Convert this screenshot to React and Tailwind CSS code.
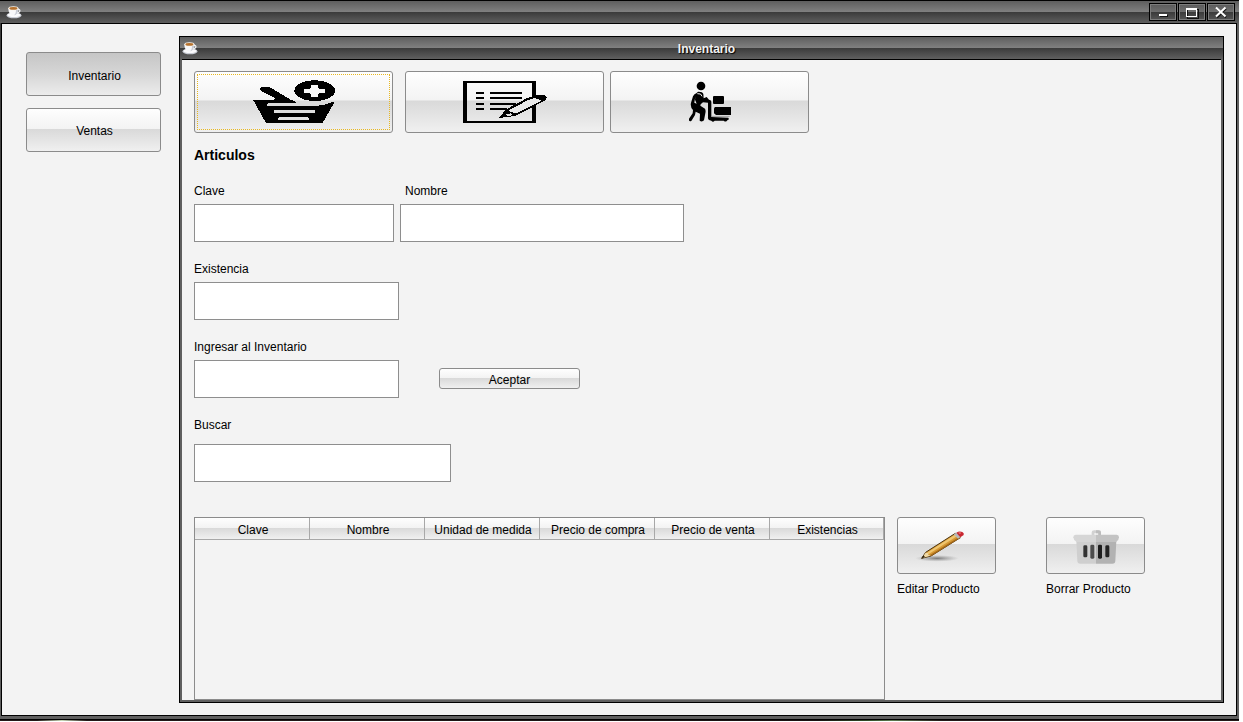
import React from 'react';

const GLOSS =
  'bg-[linear-gradient(to_bottom,#fefefe_0%,#f3f3f3_47%,#d9d9d9_48%,#f0f0f0_100%)]';
const BAR =
  'bg-[linear-gradient(to_bottom,#5e5e5e_0%,#808080_50%,#3b3b3b_51%,#5f5f5f_100%)]';

const columns = [
  'Clave',
  'Nombre',
  'Unidad de medida',
  'Precio de compra',
  'Precio de venta',
  'Existencias',
];

function CoffeeIcon() {
  return (
    <svg width="16" height="14" viewBox="0 0 16 14" aria-hidden="true" className="shrink-0">
      <ellipse cx="8" cy="10.4" rx="7.5" ry="2.9" fill="#c9ccd4" />
      <ellipse cx="8" cy="10" rx="6.500" ry="2.100" fill="#fbfbfd" />
      <path d="M2.400 3.200h10c.2 3.600-1.600 7.200-5 7.200s-5.200-3.600-5-7.200z" fill="#f8f8fa" />
      <path d="M10 5c0 3-.8 4.600-2 5.200 3.200-.2 4.400-3.200 4.400-6.600z" fill="#c9cdd6" />
      <path d="M12 4.500c2.600-.6 2.800 2.800-.8 3" fill="none" stroke="#f2f3f6" strokeWidth="1.200" />
      <ellipse cx="7.400" cy="3.200" rx="5" ry="2" fill="#fbf4ea" />
      <ellipse cx="7.400" cy="3.400" rx="4" ry="1.400" fill="#b5722f" />
    </svg>
  );
}

function BasketIcon() {
  return (
    <svg width="84" height="44" viewBox="186 42 252 132" shapeRendering="crispEdges" aria-hidden="true">
      <path
        d="M189 101H243L261 100L211 73Q207 66 217 63H238L300 100L322 109L305 111H237Q228 116 234 120H376Q404 119 432 107V111L398 171H228Z"
        fill="#000"
      />
      <ellipse cx="374" cy="74" rx="61" ry="31" fill="#000" />
      <path
        d="M363 57H385V67L391 69H406V81H390L385 84V93H363V84L358 81H342V69H358L363 66Z"
        fill="#f7f7f7"
      />
      <path d="M251 132H372Q378 136 373 141H256Q248 138 251 132Z" fill="#dedede" />
      <path d="M270 153H352Q360 157 355 162H266Q263 156 270 153Z" fill="#e3e3e3" />
      <path d="M237 111H305L330 108H372Q400 111 432 107Q404 119 376 120H234Q228 116 237 111Z" fill="#dadada" />
    </svg>
  );
}

function ListIcon() {
  return (
    <svg width="84" height="44" viewBox="189 42 252 132" shapeRendering="crispEdges" aria-hidden="true">
      <path
        fillRule="evenodd"
        d="M189 45H408V171H189ZM201 51V165H396V51Z"
        fill="#000"
      />
      <path
        d="M228 78H252V84H228ZM228 93H252V99H228ZM228 111H252V117H228ZM228 126H252V132H228ZM270 78H366V84H270ZM270 93H366V99H270ZM270 111H348V117H270ZM270 126H322V132H270Z"
        fill="#000"
      />
      <path
        d="M298 155L317 131L378 98L408 87H432L441 93L438 102L350 148L322 154Z"
        fill="#000"
      />
      <path d="M325 134L384 102L406 96L424 104L350 142L339 140Z" fill="#eaeaea" />
      <path d="M318 146L331 142L338 147L322 151Z" fill="#e0e0e0" />
    </svg>
  );
}

function PorterIcon() {
  return (
    <svg width="42" height="44" viewBox="249 42 126 132" aria-hidden="true">
      <circle cx="285" cy="60" r="13" fill="#000" />
      <path
        d="M271 82L276 77Q289 76 292 84L293 97L302 93L309 101Q315 101 316 107V153L367 155Q371 161 364 163Q360 170 353 164H326Q321 170 316 164L309 162Q305 159 306 153V110L291 109L284 115L283 119L297 128Q300 134 298 142L294 163Q288 169 281 164L282 143L269 137L267 147L256 165Q249 168 248 160L260 142L261 132Q252 122 255 110L261 91Q265 84 271 82Z"
        fill="#000"
      />
      <path d="M268 91L265 110L272 113L267 101Z" fill="#f0f0f0" />
      <path d="M274 83Q286 81 288 91" fill="none" stroke="#f7f7f7" strokeWidth="3" />
      <rect x="321" y="90" width="33" height="24" rx="3" fill="#000" />
      <path d="M327 123H375V147H330L324 142V127Z" fill="#000" />
      <path d="M316 151H371" stroke="#777" strokeWidth="2" />
    </svg>
  );
}

function PencilIcon() {
  return (
    <svg width="64" height="32" viewBox="74 58 192 96" aria-hidden="true">
      <defs>
        <radialGradient id="pencil-shadow">
          <stop offset="0" stopColor="#555" stopOpacity="0.75" />
          <stop offset="1" stopColor="#888" stopOpacity="0" />
        </radialGradient>
      </defs>
      <ellipse cx="140" cy="143" rx="66" ry="10" fill="url(#pencil-shadow)" />
      <path d="M94 143L106 125L195 68L210 81L122 136Z" fill="#d79a35" stroke="#4c3410" strokeWidth="3" />
      <path d="M110 126L196 71L201 76L114 131Z" fill="#efc56f" />
      <path d="M118 134L206 79L209 82L123 136Z" fill="#a76a19" />
      <path d="M95 142L106 126L112 127L114 132L121 135Z" fill="#f0d9a5" />
      <path d="M93 144L99 134L104 139Z" fill="#2d220e" />
      <path d="M190 71L198 66L211 78L203 84Z" fill="#b8b8b8" />
      <path d="M198 66Q207 60 216 64Q222 67 220 73L210 80Z" fill="#c82630" />
      <path d="M203 66Q209 63 213 66L209 70Z" fill="#ec7c7e" />
    </svg>
  );
}

function TrashIcon() {
  return (
    <svg width="48" height="36" viewBox="545 52 144 108" aria-hidden="true">
      <path d="M604 73V65Q604 59 612 59H624Q632 59 632 65V73H624V68H612V73Z" fill="#d2d2d2" />
      <path d="M617 59H624Q632 59 632 65V73H624V68H617Z" fill="#bdbdbd" />
      <path d="M558 90H617V159H570Q561 159 561 150Z" fill="#cfcfcf" />
      <path d="M617 90H678L675 150Q675 159 666 159H617Z" fill="#b2b2b2" />
      <path d="M556 72H617V94H559Q549 88 549 80Q549 73 556 72Z" fill="#d6d6d6" />
      <path d="M617 72H679Q686 73 686 80Q686 88 677 94H617Z" fill="#c3c3c3" />
      <rect x="579" y="104" width="12" height="36" rx="4" fill="#333" />
      <rect x="600" y="102" width="12" height="42" rx="4" fill="#4c4c4c" />
      <rect x="623" y="102" width="12" height="42" rx="4" fill="#1d1d1d" />
      <rect x="645" y="104" width="12" height="36" rx="4" fill="#222" />
    </svg>
  );
}

function WindowButton({ label, children }) {
  return (
    <button
      type="button"
      aria-label={label}
      className="flex h-[18px] w-7 items-center justify-center border border-black bg-[linear-gradient(to_bottom,#5a5a5a_0%,#6e6e6e_48%,#3a3a3a_50%,#555555_100%)] shadow-[inset_0_0_0_1px_#7d7d7d]"
    >
      <svg width="14" height="14" viewBox="0 0 14 14" fill="none" aria-hidden="true" shapeRendering="crispEdges">
        {children}
      </svg>
    </button>
  );
}

function GlossButton({ className, children, ...rest }) {
  return (
    <button
      type="button"
      className={`flex shrink-0 items-center justify-center rounded-[3px] border border-[#8b8b8b] ${GLOSS} ${className}`}
      {...rest}
    >
      {children}
    </button>
  );
}

function Field({ id, label, width, gap = 'gap-[5px]', indent = '' }) {
  return (
    <div className={`flex flex-col ${gap}`}>
      <label htmlFor={id} className={`h-4 leading-4 ${indent}`}>
        {label}
      </label>
      <input
        id={id}
        type="text"
        className={`h-[38px] border border-[#8e8e8e] bg-white px-1 outline-none ${width}`}
      />
    </div>
  );
}

function InventoryFrame() {
  return (
    <section className="flex min-w-0 flex-1 flex-col border border-black bg-[#606060]">
      <header className={`flex h-[22px] shrink-0 items-center pr-2 pl-[2px] ${BAR}`}>
        <CoffeeIcon />
        <h1 className="flex-1 pt-px text-center text-xs font-bold text-[#f2f2f2] [text-shadow:1px_1px_1px_#000]">
          Inventario
        </h1>
      </header>
      <div className="flex min-h-0 flex-1 flex-col px-[2px] pb-[2px]">
        <div className="flex min-h-0 flex-1 flex-col border-t border-black bg-[#f3f3f3] px-3 pt-[11px]">
          <div className="flex">
            <GlossButton aria-label="Agregar artículo" className="relative h-[62px] w-[199px]">
              <span className="absolute inset-[2px] border border-dotted border-[#e8b820]" />
              <BasketIcon />
            </GlossButton>
            <GlossButton aria-label="Lista de artículos" className="ml-3 h-[62px] w-[199px]">
              <ListIcon />
            </GlossButton>
            <GlossButton aria-label="Ingresar mercancía" className="ml-[6px] h-[62px] w-[199px]">
              <PorterIcon />
            </GlossButton>
          </div>

          <h2 className="mt-3 h-5 text-sm leading-5 font-bold">Articulos</h2>

          <form className="mt-[18px] flex flex-col gap-[19px]" onSubmit={(e) => e.preventDefault()}>
            <div className="flex gap-[6px]">
              <Field id="clave" label="Clave" width="w-[200px]" />
              <Field id="nombre" label="Nombre" width="w-[284px]" indent="pl-[5px]" />
            </div>
            <Field id="existencia" label="Existencia" width="w-[205px]" />
            <div className="flex items-end gap-10">
              <Field id="ingresar" label="Ingresar al Inventario" width="w-[205px]" />
              <GlossButton className="mb-[9px] h-[21px] w-[141px] pt-[2px]">Aceptar</GlossButton>
            </div>
            <Field id="buscar" label="Buscar" width="w-[257px]" gap="gap-[11px]" />
          </form>

          <div className="mt-[35px] flex min-h-0 flex-1 gap-3">
            <div className="w-[691px] shrink-0 border border-[#8b8b8b]">
              <table className="w-full table-fixed border-separate border-spacing-0">
                <colgroup>
                  {columns.map((name, i) => (
                    <col key={name} className={i < 5 ? 'w-[115px]' : ''} />
                  ))}
                </colgroup>
                <thead>
                  <tr>
                    {columns.map((name) => (
                      <th
                        key={name}
                        scope="col"
                        className={`h-[22px] border-r border-b border-[#a8a8a8] pt-[2px] pr-0 pb-0 pl-[2px] text-center leading-4 font-normal whitespace-nowrap ${GLOSS}`}
                      >
                        {name}
                      </th>
                    ))}
                  </tr>
                </thead>
                <tbody />
              </table>
            </div>
            <div className="flex gap-[50px]">
              <div className="flex w-[99px] flex-col gap-[7px]">
                <GlossButton aria-labelledby="editar" className="h-[57px] w-full">
                  <PencilIcon />
                </GlossButton>
                <span id="editar" className="leading-4 whitespace-nowrap">Editar Producto</span>
              </div>
              <div className="flex w-[99px] flex-col gap-[7px]">
                <GlossButton aria-labelledby="borrar" className="h-[57px] w-full">
                  <TrashIcon />
                </GlossButton>
                <span id="borrar" className="leading-4 whitespace-nowrap">Borrar Producto</span>
              </div>
            </div>
          </div>
        </div>
      </div>
    </section>
  );
}

export default function App() {
  return (
    <div className="flex h-screen flex-col bg-white pr-1 pb-px font-['Liberation_Sans',Arial,sans-serif] text-xs text-black">
      <div className="flex min-h-0 flex-1 flex-col border-y border-black bg-[#606060]">
        <header className={`flex h-[22px] shrink-0 items-center justify-between pr-1 pl-[6px] ${BAR}`}>
          <CoffeeIcon />
          <div className="flex gap-px">
            <WindowButton label="Minimizar">
              <path d="M4 10h8v2H4z" fill="#111" />
              <path d="M3 9h8v2H3z" fill="#fff" />
            </WindowButton>
            <WindowButton label="Maximizar">
              <path d="M2 4h11v9H2z" stroke="#111" />
              <path d="M1.500 3.500h10v8h-10z" stroke="#fff" />
              <path d="M1 3h11v2H1z" fill="#fff" />
            </WindowButton>
            <WindowButton label="Cerrar">
              <path d="M3 3.500l9 9M12 3.500l-9 9" stroke="#111" strokeWidth="2" shapeRendering="auto" />
              <path d="M2 2.500l9.500 9M11.500 2.500l-9.500 9" stroke="#fff" strokeWidth="2" shapeRendering="auto" />
            </WindowButton>
          </div>
        </header>
        <div className="flex min-h-0 flex-1 pr-[2px] pb-[3px]">
          <div className="w-px bg-[linear-gradient(to_bottom,#3b3b3b,#606060)]" />
          <main className="flex min-h-0 min-w-0 flex-1 border border-black bg-[#f3f3f3] pt-3 pr-3 pb-3 pl-6">
            <nav className="mr-[18px] flex w-[135px] shrink-0 flex-col gap-3 pt-4">
              <button
                type="button"
                aria-pressed="true"
                className="h-11 rounded-[3px] border border-[#8b8b8b] bg-[linear-gradient(to_bottom,#c6c6c6_0%,#d6d6d6_50%,#ececec_100%)] pt-1 pl-[2px]"
              >
                Inventario
              </button>
              <GlossButton className="h-11 pt-[2px] pl-[2px]">Ventas</GlossButton>
            </nav>
            <InventoryFrame />
          </main>
        </div>
      </div>
      <div className="h-px shrink-0 bg-[linear-gradient(to_right,#241818_0%,#241818_3%,#c8d8b8_5%,#241818_7%,#1a1212_66%,#2f4a26_70%,#5c7a50_72%,#241818_76%)]" />
    </div>
  );
}
